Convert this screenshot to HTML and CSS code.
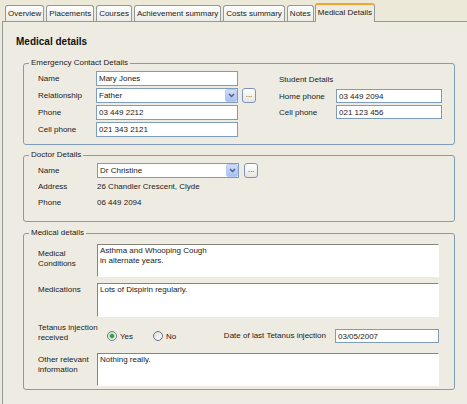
FILE: index.html
```html
<!DOCTYPE html>
<html lang="en">
<head>
	<meta charset="UTF-8">
	<title>Medical Details</title>
	<link rel="stylesheet" href="styles.css">
</head>
<body>
	<div class="tabs">
		<span class="tab">Overview</span>
		<span class="tab">Placements</span>
		<span class="tab">Courses</span>
		<span class="tab">Achievement summary</span>
		<span class="tab">Costs summary</span>
		<span class="tab">Notes</span>
		<span class="tab active">Medical Details</span>
	</div>

	<div class="page">
		<h1 class="title">Medical details</h1>

		<fieldset class="group">
			<legend>Emergency Contact Details</legend>
			<div class="group_body contact">
				<div class="form">
					<label>Name</label>
					<input class="text" type="text" value="Mary Jones">
					<label>Relationship</label>
					<div class="pick">
						<div class="combo">
							<span class="combo_val">Father</span>
							<span class="drop"><svg width="7" height="5" viewBox="0 0 7 5"><path d="M1 1 L3.5 3.5 L6 1" fill="none" stroke="#4d6185" stroke-width="1.5"/></svg></span>
						</div>
						<span class="more">...</span>
					</div>
					<label>Phone</label>
					<input class="text" type="text" value="03 449 2212">
					<label>Cell phone</label>
					<input class="text" type="text" value="021 343 2121">
				</div>

				<div class="student">
					<div class="student_head">Student Details</div>
					<div class="form narrow">
						<label>Home phone</label>
						<input class="text" type="text" value="03 449 2094">
						<label>Cell phone</label>
						<input class="text" type="text" value="021 123 456">
					</div>
				</div>
			</div>
		</fieldset>

		<fieldset class="group doctor">
			<legend>Doctor Details</legend>
			<div class="group_body">
				<div class="form">
					<label>Name</label>
					<div class="pick">
						<div class="combo">
							<span class="combo_val">Dr Christine</span>
							<span class="drop"><svg width="7" height="5" viewBox="0 0 7 5"><path d="M1 1 L3.5 3.5 L6 1" fill="none" stroke="#4d6185" stroke-width="1.5"/></svg></span>
						</div>
						<span class="more">...</span>
					</div>
					<label>Address</label>
					<span class="value">26 Chandler Crescent, Clyde</span>
					<label>Phone</label>
					<span class="value">06 449 2094</span>
				</div>
			</div>
		</fieldset>

		<fieldset class="group medical">
			<legend>Medical details</legend>
			<div class="group_body">
				<div class="mrow">
					<label class="mlabel cond">Medical<br>Conditions</label>
					<textarea class="memo">Asthma and Whooping Cough
in alternate years.</textarea>
				</div>
				<div class="mrow">
					<label class="mlabel">Medications</label>
					<textarea class="memo">Lots of Dispirin regularly.</textarea>
				</div>
				<div class="mrow">
					<label class="mlabel tight">Tetanus injection<br>received</label>
					<div class="opts">
						<span class="radio on"><i></i>Yes</span>
						<span class="radio no"><i></i>No</span>
						<span class="date_label">Date of last Tetanus injection</span>
						<input class="text date" type="text" value="03/05/2007">
					</div>
				</div>
				<div class="mrow other">
					<label class="mlabel">Other relevant<br>information</label>
					<textarea class="memo">Nothing really.</textarea>
				</div>
			</div>
		</fieldset>
	</div>
</body>
</html>
```

FILE: styles.css
```css
*{margin: 0; padding: 0; box-sizing: border-box;}
html, body{height: 100%; overflow: hidden;}
body{
	background: #ECE9D8;
	font: 8px "Liberation Sans", Arial, sans-serif;
	color: #1a1a1a;
}

/* tab strip */
.tabs{
	display: flex;
	align-items: flex-end;
	gap: 2px;
	height: 21px;
	padding-left: 5px;
}
.tab{
	height: 16px;
	line-height: 15px;
	padding: 0 2px;
	border: 1px solid #919B9C;
	border-bottom: 0;
	border-radius: 3px 3px 0 0;
	background: linear-gradient(#FEFEFE, #ECEBE4);
	white-space: nowrap;
}
.tab.active{
	height: 19px;
	line-height: 16px;
	margin-bottom: -1px;
	margin-left: -1px;
	position: relative;
	z-index: 1;
	border-top: 2px solid #F2A630;
	background: #EEECE2;
}

/* page */
.page{
	margin-left: 2px;
	margin-right: -10px;
	height: 400px;
	border-top: 1px solid #919B9C;
	border-left: 1px solid #919B9C;
	background: #EEECE2;
	padding: 14px 0 0 13px;
}
.title{
	font-size: 10px;
	line-height: 12px;
	font-weight: bold;
	color: #111;
	margin-bottom: 10px;
}

/* group boxes */
.group{
	width: 432px;
	margin-left: 7px;
	border: 1px solid #7F9DB9;
	border-radius: 3px;
	padding: 0;
	min-width: 0;
}
.group legend{
	margin-left: 5px;
	padding: 0 2px;
	line-height: 10px;
}
.group_body{
	padding: 3px 0 7px 14px;
}
.doctor{margin-top: 5px;}
.doctor .group_body{padding: 3px 0 11px 14px;}
.medical{margin-top: 6px;}
.medical .group_body{padding: 6px 0 3px 14px;}

/* label / field grids */
.contact{display: flex;}
.form{
	display: grid;
	grid-template-columns: 58px auto;
	grid-auto-rows: 15px;
	row-gap: 2px;
	align-items: center;
}
.form label{white-space: nowrap;}
.doctor .form{
	grid-template-columns: 59px auto;
	row-gap: 1px;
}

.student{
	margin-left: 23px;
	margin-top: 3px;
}
.student_head{
	line-height: 12px;
	margin-bottom: 3px;
}
.form.narrow{
	grid-template-columns: 57px auto;
	grid-auto-rows: 14px;
}

.text{
	width: 142px;
	height: 15px;
	border: 1px solid #7F9DB9;
	background: #fff;
	padding: 0 2px;
	font: inherit;
	color: #1a1a1a;
	outline: none;
}
.narrow .text{width: 106px; height: 14px;}

/* combo box with lookup button */
.pick{
	display: flex;
	gap: 4px;
	height: 15px;
}
.doctor .pick{gap: 5px;}
.combo{
	display: flex;
	width: 142px;
	height: 15px;
	border: 1px solid #7F9DB9;
	background: #fff;
}
.combo_val{
	flex: 1;
	padding-left: 2px;
	line-height: 13px;
}
.drop{
	width: 12px;
	border: 1px solid #B7CAF5;
	border-radius: 2px;
	background: linear-gradient(#CFDCFA, #A8BFF2);
	display: flex;
	align-items: center;
	justify-content: center;
}
.more{
	width: 14px;
	height: 15px;
	border: 1px solid #7C93BE;
	border-radius: 3px;
	background: linear-gradient(#FFFFFF, #E6E5DD);
	text-align: center;
	line-height: 11px;
	color: #333;
}

/* medical rows */
.mrow{display: flex;}
.mrow + .mrow{margin-top: 6px;}
.mrow.other{margin-top: 10px;}
.mlabel{
	width: 59px;
	flex: none;
	line-height: 10px;
	padding-top: 2px;
	white-space: nowrap;
}
.mlabel.cond{padding-top: 5px;}
.mlabel.tight{padding-top: 0;}
.memo{
	width: 342px;
	height: 34px;
	border: 1px solid;
	border-color: #85857C #FFFFFF #FFFFFF #85857C;
	background: #fff;
	padding: 1px 2px;
	font: inherit;
	line-height: 10px;
	color: #1a1a1a;
	resize: none;
	overflow: hidden;
	outline: none;
}
.mrow:first-child .memo{height: 33px;}
.mrow.other .memo{height: 33px;}

.opts{
	width: 342px;
	height: 20px;
	display: flex;
	align-items: flex-end;
}
.radio{
	display: flex;
	align-items: center;
	gap: 3px;
	height: 14px;
	margin-left: 10px;
}
.radio.no{margin-left: 20px;}
.radio i{
	width: 10px;
	height: 10px;
	border: 1px solid #5C7894;
	border-radius: 50%;
	background: linear-gradient(135deg, #DCDCD5, #FFFFFF);
}
.radio.on i{
	background: radial-gradient(circle, #2FA82F 0 1.8px, #8FD08F 2.3px, transparent 2.8px), linear-gradient(135deg, #DCDCD5, #FFFFFF);
}
.date_label{
	margin-left: auto;
	margin-right: 9px;
	line-height: 14px;
}
.text.date{width: 104px; height: 14px;}
```
